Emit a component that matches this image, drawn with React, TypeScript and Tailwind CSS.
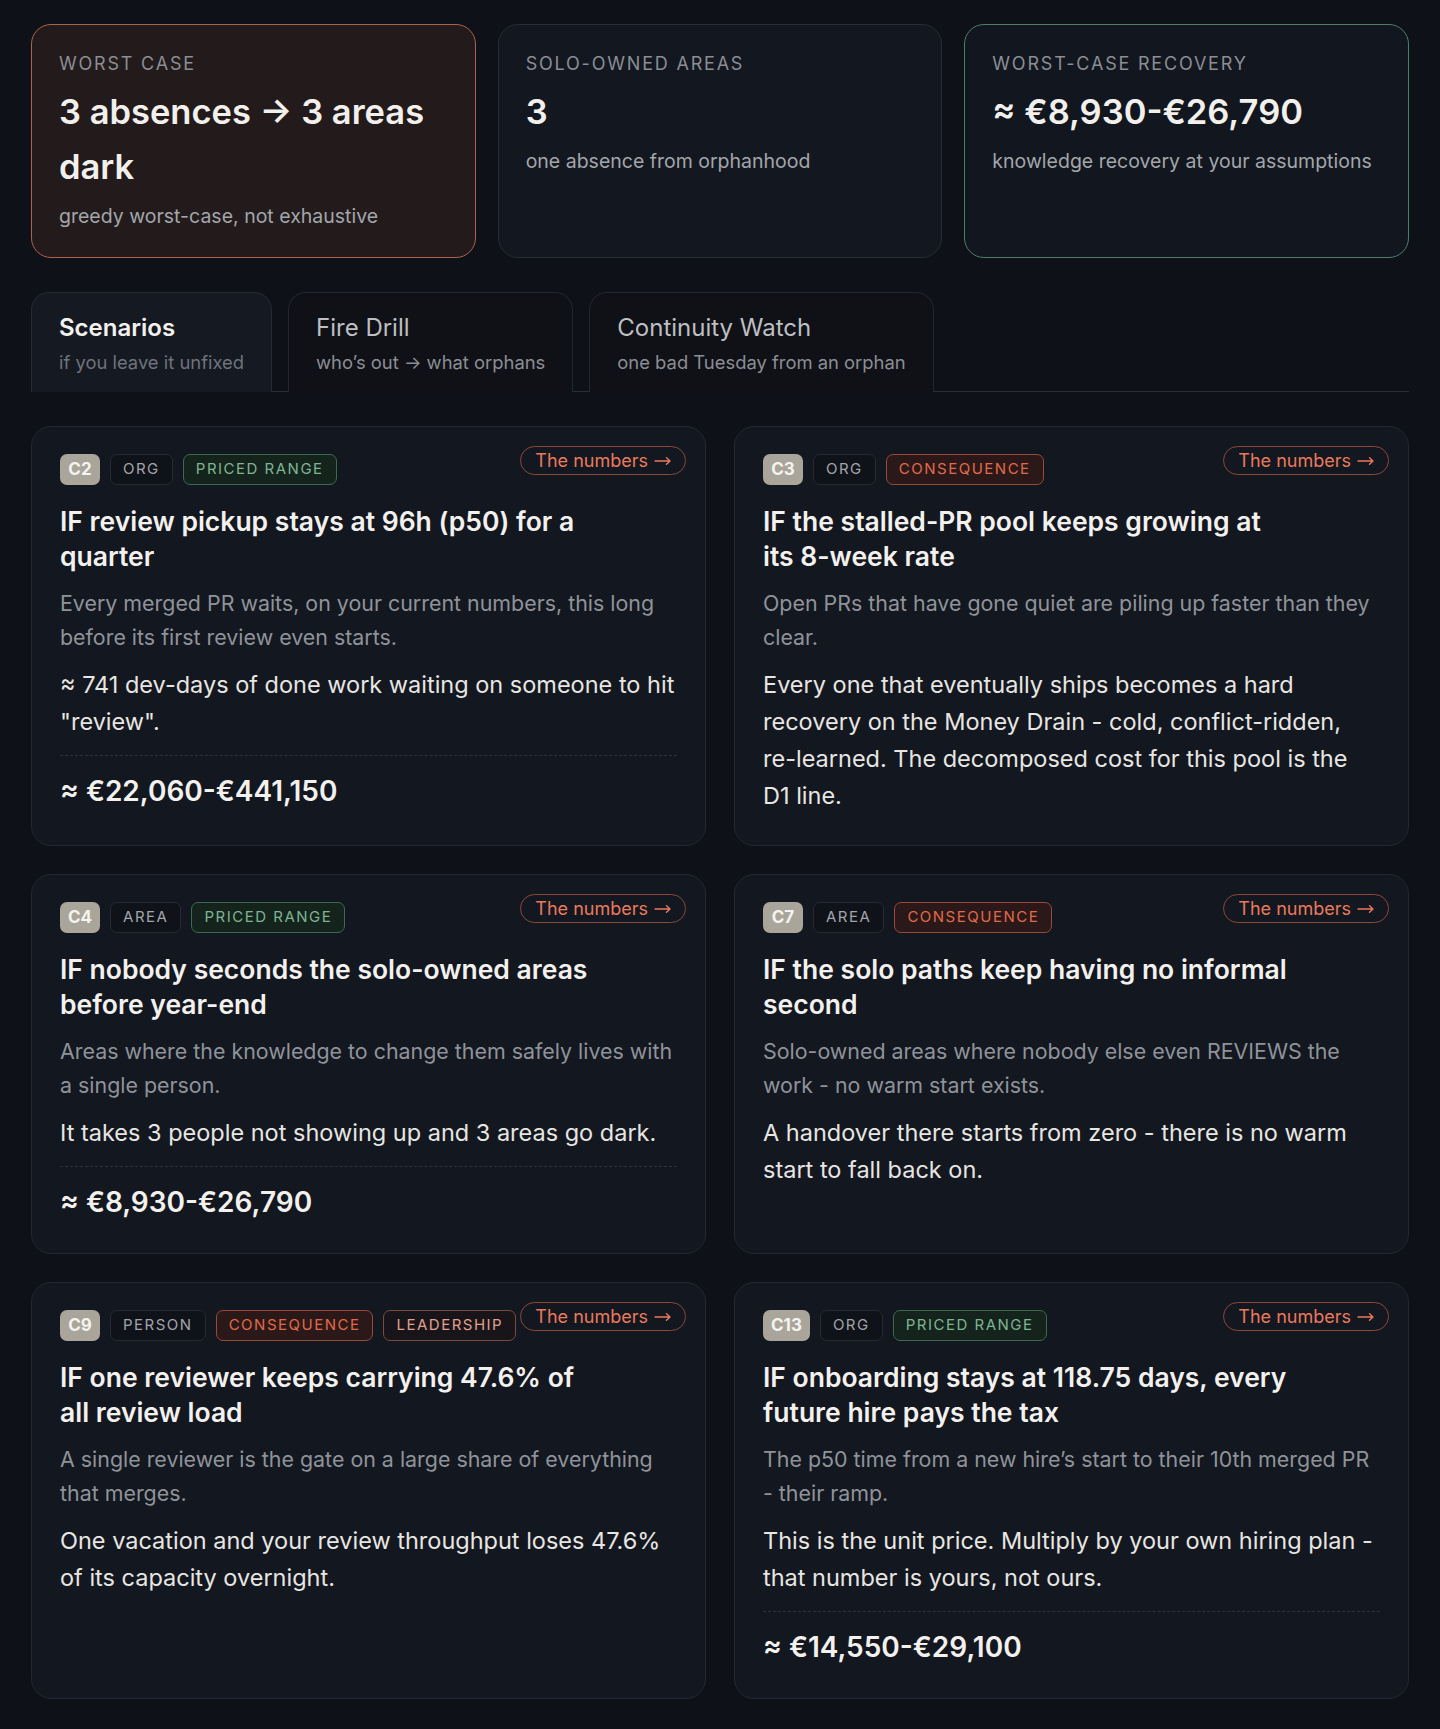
import React, { useState } from 'react';

type Tone = 'plain' | 'priced' | 'consequence' | 'leadership';

interface Scenario {
  id: string;
  tags: { label: string; tone: Tone }[];
  title: string;
  desc: string;
  body: string;
  price?: string;
}

const scenarios: Scenario[] = [
  {
    id: 'C2',
    tags: [
      { label: 'ORG', tone: 'plain' },
      { label: 'PRICED RANGE', tone: 'priced' },
    ],
    title: 'IF review pickup stays at 96h (p50) for a quarter',
    desc: 'Every merged PR waits, on your current numbers, this long before its first review even starts.',
    body: '≈ 741 dev-days of done work waiting on someone to hit "review".',
    price: '≈ €22,060-€441,150',
  },
  {
    id: 'C3',
    tags: [
      { label: 'ORG', tone: 'plain' },
      { label: 'CONSEQUENCE', tone: 'consequence' },
    ],
    title: 'IF the stalled-PR pool keeps growing at its 8-week rate',
    desc: 'Open PRs that have gone quiet are piling up faster than they clear.',
    body: 'Every one that eventually ships becomes a hard recovery on the Money Drain - cold, conflict-ridden, re-learned. The decomposed cost for this pool is the D1 line.',
  },
  {
    id: 'C4',
    tags: [
      { label: 'AREA', tone: 'plain' },
      { label: 'PRICED RANGE', tone: 'priced' },
    ],
    title: 'IF nobody seconds the solo-owned areas before year-end',
    desc: 'Areas where the knowledge to change them safely lives with a single person.',
    body: 'It takes 3 people not showing up and 3 areas go dark.',
    price: '≈ €8,930-€26,790',
  },
  {
    id: 'C7',
    tags: [
      { label: 'AREA', tone: 'plain' },
      { label: 'CONSEQUENCE', tone: 'consequence' },
    ],
    title: 'IF the solo paths keep having no informal second',
    desc: 'Solo-owned areas where nobody else even REVIEWS the work - no warm start exists.',
    body: 'A handover there starts from zero - there is no warm start to fall back on.',
  },
  {
    id: 'C9',
    tags: [
      { label: 'PERSON', tone: 'plain' },
      { label: 'CONSEQUENCE', tone: 'consequence' },
      { label: 'LEADERSHIP', tone: 'leadership' },
    ],
    title: 'IF one reviewer keeps carrying 47.6% of all review load',
    desc: 'A single reviewer is the gate on a large share of everything that merges.',
    body: 'One vacation and your review throughput loses 47.6% of its capacity overnight.',
  },
  {
    id: 'C13',
    tags: [
      { label: 'ORG', tone: 'plain' },
      { label: 'PRICED RANGE', tone: 'priced' },
    ],
    title: 'IF onboarding stays at 118.75 days, every future hire pays the tax',
    desc: 'The p50 time from a new hire’s start to their 10th merged PR - their ramp.',
    body: 'This is the unit price. Multiply by your own hiring plan - that number is yours, not ours.',
    price: '≈ €14,550-€29,100',
  },
];

const toneClass: Record<Tone, string> = {
  plain: 'bg-[#0f1218] border-[#252a33] text-[#a2a5ab]',
  priced: 'bg-[#15231d] border-[#3b6a50] text-[#7db592]',
  consequence: 'bg-[#2a1918] border-[#9a4a38] text-[#e2694a]',
  leadership: 'bg-[#18151a] border-[#7b4a3f] text-[#e3a08c]',
};

const tabs = [
  { title: 'Scenarios', sub: 'if you leave it unfixed' },
  { title: 'Fire Drill', sub: 'who’s out → what orphans' },
  { title: 'Continuity Watch', sub: 'one bad Tuesday from an orphan' },
];

const StatCard: React.FC<{
  label: string;
  value: string;
  desc: string;
  variant: 'alert' | 'plain' | 'good';
}> = ({ label, value, desc, variant }) => {
  const frame =
    variant === 'alert'
      ? 'bg-[#221a1b] border-[#b0614b]'
      : variant === 'good'
        ? 'bg-[#12161e] border-[#4d7e6c]'
        : 'bg-[#131720] border-[#272c35]';
  return (
    <div className={`rounded-[20px] border px-[27px] pt-[27px] pb-[26px] ${frame}`}>
      <div className="text-[18px] leading-[24px] tracking-[0.1em] uppercase text-[#8b8e94]">{label}</div>
      <div className="mt-[8px] text-[34.5px] leading-[55px] font-semibold text-[#f2f0ed]">{value}</div>
      <div className="mt-[7px] text-[19.5px] leading-[30px] text-[#a3a6ab]">{desc}</div>
    </div>
  );
};

const ScenarioCard: React.FC<{ s: Scenario }> = ({ s }) => (
  <div className="relative rounded-[20px] border border-[#232832] bg-[#131720] px-[28px] pt-[27px] pb-[31px]">
    <button className="absolute top-[19px] right-[19px] h-[29px] pl-[14px] pr-[14px] rounded-full border border-[#8c4738] text-[18px] leading-none text-[#ea7a5c] flex items-center gap-[6px]">
      The numbers
      <svg width="17" height="10" viewBox="0 0 17 10" fill="none" stroke="currentColor" strokeWidth="1.4" strokeLinecap="round" strokeLinejoin="round">
        <path d="M1 5h15M12.5 1.8 16 5l-3.5 3.2" />
      </svg>
    </button>
    <div className="flex items-center gap-[10px]">
      <span className="h-[31px] min-w-[40px] px-[8px] rounded-[7px] bg-[#a9a59b] text-[#f5f3ee] text-[17px] font-bold flex items-center justify-center">
        {s.id}
      </span>
      {s.tags.map((t) => (
        <span
          key={t.label}
          className={`h-[31px] px-[12px] rounded-[7px] border text-[15px] tracking-[0.1em] flex items-center ${toneClass[t.tone]}`}
        >
          {t.label}
        </span>
      ))}
    </div>
    <h3 className="mt-[19px] max-w-[530px] text-[26.5px] leading-[35px] font-semibold text-[#f3f1ee]">{s.title}</h3>
    <p className="mt-[12px] text-[21.4px] leading-[34px] text-[#8f9399]">{s.desc}</p>
    <p className="mt-[12px] text-[23.5px] leading-[37px] text-[#e8e6e2]">{s.body}</p>
    {s.price && (
      <div className="mt-[15px] border-t border-dashed border-[#2d323c] pt-[15px] text-[28px] leading-[40px] font-semibold text-[#f3f1ee]">
        {s.price}
      </div>
    )}
  </div>
);

export default function App() {
  const [active, setActive] = useState(0);

  return (
    <div className="min-h-screen bg-[#0e1117] px-[31px] pt-[24px] pb-[30px] font-['Inter',sans-serif]">
      <div className="grid grid-cols-3 gap-[22px]">
        <StatCard
          variant="alert"
          label="Worst case"
          value="3 absences → 3 areas dark"
          desc="greedy worst-case, not exhaustive"
        />
        <StatCard variant="plain" label="Solo-owned areas" value="3" desc="one absence from orphanhood" />
        <StatCard
          variant="good"
          label="Worst-case recovery"
          value="≈ €8,930-€26,790"
          desc="knowledge recovery at your assumptions"
        />
      </div>

      <div className="mt-[34px] flex items-end gap-[16px] border-b border-[#2a2e37]">
        {tabs.map((t, i) => (
          <button
            key={t.title}
            onClick={() => setActive(i)}
            className={`-mb-px text-left rounded-t-[18px] border border-b-0 px-[27px] pt-[20px] pb-[17px] ${
              i === active ? 'bg-[#151922] border-[#262a33]' : 'bg-[#0f1116] border-[#23272f]'
            }`}
          >
            <div
              className={`text-[24px] leading-[30px] ${
                i === active ? 'font-semibold text-[#f3f1ee]' : 'text-[#bdbfc3]'
              }`}
            >
              {t.title}
            </div>
            <div
              className={`mt-[6px] text-[18.4px] leading-[26px] ${
                i === active ? 'text-[#6f737a]' : 'text-[#8b8e94]'
              }`}
            >
              {t.sub}
            </div>
          </button>
        ))}
      </div>

      <div className="mt-[34px] grid grid-cols-2 gap-[28px]">
        {scenarios.map((s) => (
          <ScenarioCard key={s.id} s={s} />
        ))}
      </div>
    </div>
  );
}
